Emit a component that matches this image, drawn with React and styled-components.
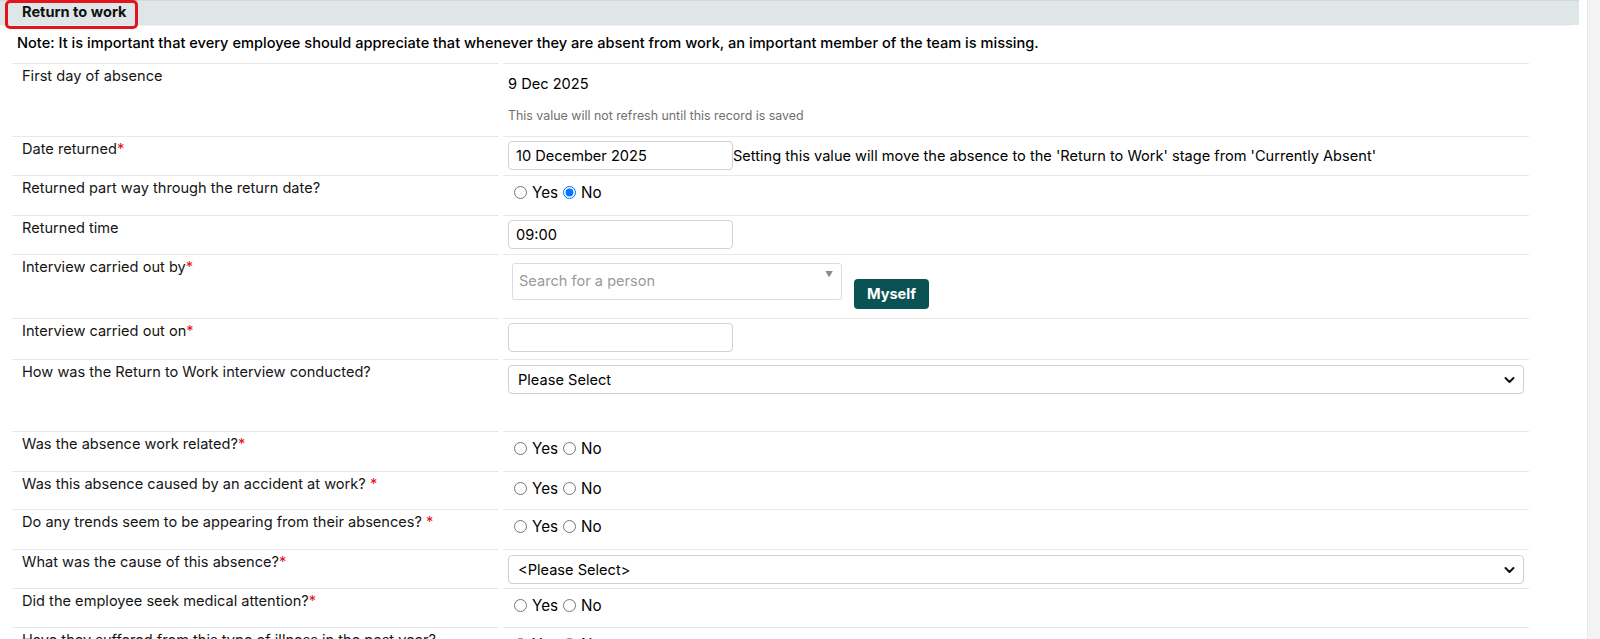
import React from "react";
import styled, { createGlobalStyle } from "styled-components";

const Global = createGlobalStyle`
  html, body { margin: 0; padding: 0; background: #fff; }
  body { font-family: Inter, "Noto Sans", "Liberation Sans", sans-serif; color: #111; font-size: 14.6px; }
  #root { height: 639px; overflow: hidden; }
`;

const Page = styled.div`
  display: flex;
  height: 639px;
`;

const Main = styled.div`
  flex: 1;
  padding-right: 8px;
  min-width: 0;
`;

const Scrollbar = styled.div`
  width: 12px;
  background: #f3f3f3;
  border-left: 1px solid #e7e7e7;
`;

const SectionHeader = styled.div`
  position: relative;
  height: 24px;
  border-top: 1px solid #d3d8d9;
  background: #dfe6e7;
  padding-left: 22px;
  font-weight: 700;
  font-size: 14.6px;
  line-height: 23px;
  color: #111;
`;

const Highlight = styled.div`
  position: absolute;
  left: 5px;
  top: -1px;
  width: 133px;
  height: 29px;
  box-sizing: border-box;
  border: 3px solid #e3141c;
  border-radius: 5px;
`;

const Note = styled.div`
  height: 38px;
  box-sizing: border-box;
  margin-right: 9px;
  border-top: 1px solid #eef1f2;
  padding: 9px 0 0 17px;
  font-weight: 500;
  line-height: 17px;
  color: #000;
`;

const Table = styled.div`
  margin-left: 12px;
  width: 1517px;
  display: grid;
  grid-template-columns: 487px 1026px;
  column-gap: 4px;
`;

const LabelCell = styled.div`
  height: ${(p) => p.$h}px;
  box-sizing: border-box;
  border-top: 1px solid #e8e8e8;
  padding: 4px 0 0 10px;
  line-height: 17px;
  color: #151515;
`;

const ValueCell = styled.div`
  height: ${(p) => p.$h}px;
  box-sizing: border-box;
  border-top: 1px solid #e8e8e8;
  padding: 4px 0 0 5px;
  color: #000;
  display: flex;
  flex-direction: ${(p) => (p.$col ? "column" : "row")};
  align-items: flex-start;
`;

const Req = styled.span`
  color: #e8101a;
`;

const StaticValue = styled.div`
  padding-top: 6px;
  line-height: 20px;
`;

const Helper = styled.div`
  margin-top: 14px;
  font-size: 12.4px;
  color: #6f6f6f;
  line-height: 15px;
`;

const InlineGroup = styled.div`
  display: flex;
  align-items: center;
`;

const TextInput = styled.input`
  width: 225px;
  height: 29px;
  box-sizing: border-box;
  border: 1px solid #d2d2d2;
  border-radius: 4px;
  padding: 0 7px;
  font-family: inherit;
  font-size: 14.6px;
  color: #000;
  outline: none;
`;

const RadioGroup = styled.div`
  padding: 3px 0 0 1px;
  line-height: 20px;
  font-size: 15.2px;
  input { margin: 3px 5px 0 5px; vertical-align: -1px; }
`;

const PersonRow = styled.div`
  display: flex;
  align-items: flex-start;
  padding: 4px 0 0 4px;
  gap: 12px;
`;

const PersonSearch = styled.div`
  width: 330px;
  height: 37px;
  box-sizing: border-box;
  border: 1px solid #dcdcdc;
  border-radius: 3px;
  display: flex;
  justify-content: space-between;
  padding: 0 8px 0 6px;
  color: #9a9a9a;
`;

const Placeholder = styled.span`
  line-height: 35px;
`;

const Caret = styled.span`
  font-size: 8px;
  color: #8a8a8a;
  padding-top: 5px;
`;

const MyselfButton = styled.button`
  margin-top: 16px;
  width: 75px;
  height: 30px;
  border: none;
  border-radius: 4px;
  background: #0b5254;
  color: #fff;
  font-family: inherit;
  font-weight: 700;
  font-size: 14.6px;
  padding: 0;
`;

const SelectBox = styled.div`
  margin-top: 1px;
  width: 1016px;
  height: 29px;
  box-sizing: border-box;
  border: 1px solid #cfcfcf;
  border-radius: 4px;
  display: flex;
  align-items: center;
  justify-content: space-between;
  padding: 0 8px 0 9px;
`;

const Chevron = () => (
  <svg width="11" height="8" viewBox="0 0 11 8">
    <path d="M1.5 2 L5.5 6 L9.5 2" fill="none" stroke="#111" strokeWidth="2" strokeLinecap="round" strokeLinejoin="round" />
  </svg>
);

const YesNo = ({ name, value }) => (
  <RadioGroup>
    <input type="radio" name={name} defaultChecked={value === "yes"} />Yes
    <input type="radio" name={name} defaultChecked={value === "no"} />No
  </RadioGroup>
);

const Label = ({ children, req, space }) => (
  <>
    {children}
    {req && <Req>{space ? " *" : "*"}</Req>}
  </>
);

const rows = [
  { label: "Date returned", req: true, h: 39, kind: "date" },
  { label: "Returned part way through the return date?", h: 40, kind: "radio", value: "no" },
  { label: "Returned time", h: 39, kind: "time" },
  { label: "Interview carried out by", req: true, h: 64, kind: "person" },
  { label: "Interview carried out on", req: true, h: 41, kind: "empty" },
  { label: "How was the Return to Work interview conducted?", h: 72, kind: "select", text: "Please Select" },
  { label: "Was the absence work related?", req: true, h: 40, kind: "radio" },
  { label: "Was this absence caused by an accident at work?", req: true, space: true, h: 38, kind: "radio" },
  { label: "Do any trends seem to be appearing from their absences?", req: true, space: true, h: 40, kind: "radio" },
  { label: "What was the cause of this absence?", req: true, h: 39, kind: "select", text: "<Please Select>" },
  { label: "Did the employee seek medical attention?", req: true, h: 39, kind: "radio" },
  { label: "Have they suffered from this type of illness in the past year?", h: 40, kind: "radio" },
];

const renderValue = (r, i) => {
  switch (r.kind) {
    case "date":
      return (
        <InlineGroup>
          <TextInput readOnly value="10 December 2025" />
          <span>Setting this value will move the absence to the 'Return to Work' stage from 'Currently Absent'</span>
        </InlineGroup>
      );
    case "time":
      return <TextInput readOnly value="09:00" />;
    case "empty":
      return <TextInput readOnly value="" />;
    case "person":
      return (
        <PersonRow>
          <PersonSearch>
            <Placeholder>Search for a person</Placeholder>
            <Caret>▼</Caret>
          </PersonSearch>
          <MyselfButton>Myself</MyselfButton>
        </PersonRow>
      );
    case "select":
      return (
        <SelectBox>
          <span>{r.text}</span>
          <Chevron />
        </SelectBox>
      );
    default:
      return <YesNo name={"r" + i} value={r.value} />;
  }
};

export default function App() {
  return (
    <>
      <Global />
      <Page>
        <Main>
          <SectionHeader>
            Return to work
            <Highlight />
          </SectionHeader>
          <Note>
            Note: It is important that every employee should appreciate that whenever they are absent from work, an important member of the team is missing.
          </Note>
          <Table>
            <LabelCell $h={73}>First day of absence</LabelCell>
            <ValueCell $h={73} $col>
              <StaticValue>9 Dec 2025</StaticValue>
              <Helper>This value will not refresh until this record is saved</Helper>
            </ValueCell>
            {rows.map((r, i) => (
              <React.Fragment key={i}>
                <LabelCell $h={r.h}>
                  <Label req={r.req} space={r.space}>{r.label}</Label>
                </LabelCell>
                <ValueCell $h={r.h}>{renderValue(r, i)}</ValueCell>
              </React.Fragment>
            ))}
          </Table>
        </Main>
        <Scrollbar />
      </Page>
    </>
  );
}
